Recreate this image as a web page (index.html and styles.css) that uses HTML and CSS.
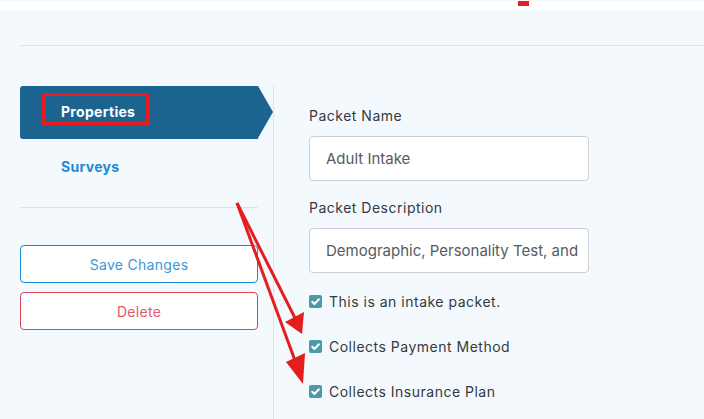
FILE: index.html
```html
<!DOCTYPE html>
<html>
<head>
<meta charset="utf-8">
<link rel="stylesheet" href="styles.css">
</head>
<body>
<div class="topbar"><span class="topmark"></span></div>
<div class="page">
  <div class="header-rule"></div>
  <div class="content">
    <aside class="sidebar">
      <nav class="tabs">
        <div class="tab active"><span class="annot">Properties</span></div>
        <div class="tab">Surveys</div>
      </nav>
      <div class="side-sep"></div>
      <div class="actions">
        <button class="btn btn-save">Save Changes</button>
        <button class="btn btn-delete">Delete</button>
      </div>
    </aside>
    <main class="form">
      <div class="field">
        <div class="label">Packet Name</div>
        <div class="input">Adult Intake</div>
      </div>
      <div class="field">
        <div class="label">Packet Description</div>
        <div class="input">Demographic, Personality Test, and</div>
      </div>
      <div class="check-row first"><span class="cb"><svg viewBox="0 0 13 13" width="13" height="13"><path d="M3.2 6.8 L5.4 9 L9.9 4.3" fill="none" stroke="#fff" stroke-width="2" stroke-linecap="round" stroke-linejoin="round"/></svg></span>This is an intake packet.</div>
      <div class="check-row"><span class="cb"><svg viewBox="0 0 13 13" width="13" height="13"><path d="M3.2 6.8 L5.4 9 L9.9 4.3" fill="none" stroke="#fff" stroke-width="2" stroke-linecap="round" stroke-linejoin="round"/></svg></span>Collects Payment Method</div>
      <div class="check-row"><span class="cb"><svg viewBox="0 0 13 13" width="13" height="13"><path d="M3.2 6.8 L5.4 9 L9.9 4.3" fill="none" stroke="#fff" stroke-width="2" stroke-linecap="round" stroke-linejoin="round"/></svg></span>Collects Insurance Plan</div>
    </main>
  </div>
</div>
<svg class="arrows" width="704" height="419" viewBox="0 0 704 419">
  <line x1="237" y1="203" x2="296" y2="320" stroke="#e41e1e" stroke-width="3"/>
  <polygon points="285,322 304,312 302,334" fill="#e41e1e"/>
  <line x1="237" y1="203" x2="297" y2="366" stroke="#e41e1e" stroke-width="3"/>
  <polygon points="286,362 305,353 303,384" fill="#e41e1e"/>
</svg>
</body>
</html>
```
FILE: styles.css
```css
* { box-sizing: border-box; }
html, body { margin: 0; padding: 0; }
body {
  width: 704px;
  height: 419px;
  overflow: hidden;
  background: #f4f9fd;
  font-family: "Inter", "Open Sans", sans-serif;
  color: #333a40;
  letter-spacing: 0.5px;
  position: relative;
}
.topbar {
  height: 9px;
  background: #ffffff;
  padding-left: 518px;
}
.topmark {
  display: block;
  width: 11px;
  height: 5px;
  margin-top: 1px;
  background: #e41e1e;
}
.page { padding-left: 20px; }
.header-rule {
  margin-top: 35px;
  height: 1px;
  background: #dde3e8;
}
.content {
  display: flex;
  margin-top: 40px;
}
.sidebar {
  width: 254px;
  border-right: 1px solid #dde3e8;
  height: 334px;
}
.tabs { display: flex; flex-direction: column; }
.tab {
  height: 53px;
  width: 238px;
  display: flex;
  align-items: center;
  padding-left: 41px;
  padding-top: 1px;
  font-size: 14px;
  font-weight: 700;
  letter-spacing: 0.3px;
  color: #1e8ad3;
  position: relative;
}
.tab.active {
  background: #1c6490;
  color: #ffffff;
  border-radius: 3px 0 0 3px;
  padding-left: 22px;
  padding-top: 7px;
  align-items: flex-start;
}
.tab.active::after {
  content: "";
  position: absolute;
  right: -15px;
  top: 0;
  border-top: 26.5px solid transparent;
  border-bottom: 26.5px solid transparent;
  border-left: 15px solid #1c6490;
}
.annot {
  border: 3px solid #e41e1e;
  padding: 8px 11px 2px 16px;
  line-height: 16px;
}
.side-sep {
  width: 238px;
  height: 1px;
  background: #dde3e8;
  margin-top: 15px;
}
.actions {
  margin-top: 37px;
  width: 238px;
  display: flex;
  flex-direction: column;
  gap: 9px;
}
.btn {
  height: 38px;
  width: 238px;
  background: #ffffff;
  border-radius: 4px;
  font-family: inherit;
  font-size: 14px;
  letter-spacing: 0.3px;
  cursor: pointer;
}
.btn-save { border: 1px solid #1e8ad3; color: #3b98d8; }
.btn-delete { border: 1px solid #d94456; color: #e05a6e; }
.form {
  padding-left: 35px;
  padding-top: 21px;
  display: flex;
  flex-direction: column;
}
.field { margin-bottom: 18px; }
.label {
  font-size: 14px;
  line-height: 18px;
  color: #333a40;
  margin-bottom: 11px;
}
.input {
  width: 280px;
  height: 45px;
  background: #ffffff;
  border: 1px solid #ccd0d4;
  border-radius: 4px;
  padding: 0 12px 0 16px;
  display: flex;
  align-items: center;
  font-size: 15px;
  letter-spacing: 0;
  color: #555b61;
  white-space: nowrap;
  overflow: hidden;
}
.check-row {
  display: flex;
  align-items: center;
  height: 18px;
  font-size: 14px;
  color: #333a40;
  margin-top: 27px;
}
.check-row.first { margin-top: 1px; }
.cb {
  width: 13px;
  height: 13px;
  border-radius: 2px;
  background: #4b9aa9;
  margin-right: 7px;
  display: flex;
}
.arrows {
  position: absolute;
  left: 0;
  top: 0;
  pointer-events: none;
}
```
